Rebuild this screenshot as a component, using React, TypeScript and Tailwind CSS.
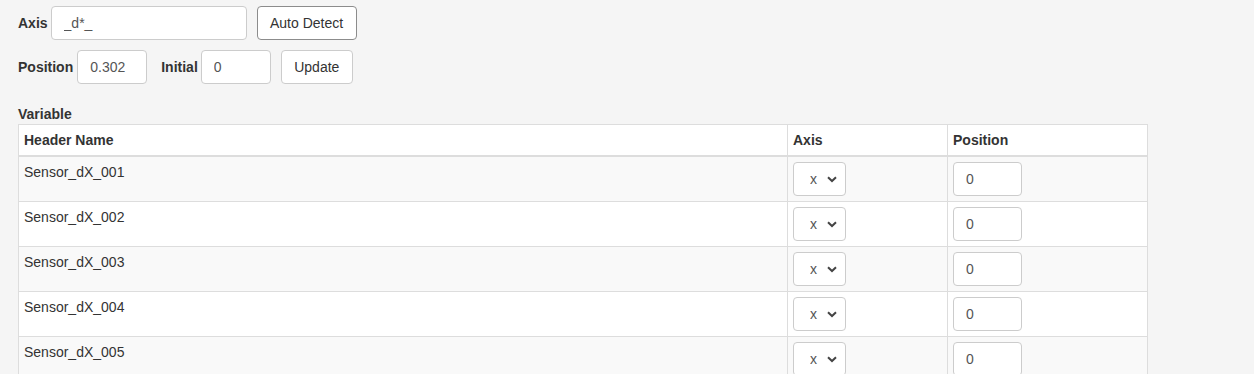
import { useState } from "react";

const font = { fontFamily: '"Liberation Sans", Arial, Helvetica, sans-serif' };

const inputCls =
  "h-[34px] rounded-[4px] border border-[#ccc] bg-white px-3 text-[14px] text-[#555] outline-none";
const btnCls =
  "h-[34px] rounded-[4px] border bg-white px-3 text-[14px] text-[#333]";

const rows = ["Sensor_dX_001", "Sensor_dX_002", "Sensor_dX_003", "Sensor_dX_004", "Sensor_dX_005"];

function AxisSelect() {
  return (
    <div className="relative h-[34px] w-[53px]">
      <select
        defaultValue="x"
        className="h-full w-full appearance-none rounded-[4px] border border-[#ccc] bg-white pl-[16px] text-[14px] text-[#555] outline-none"
      >
        <option value="x">x</option>
        <option value="y">y</option>
        <option value="z">z</option>
      </select>
      <svg
        className="pointer-events-none absolute right-[9px] top-[14px]"
        width="10"
        height="7"
        viewBox="0 0 10 7"
      >
        <path d="M1 1.2 L5 5 L9 1.2" fill="none" stroke="#444" strokeWidth="2" />
      </svg>
    </div>
  );
}

export default function App() {
  const [axis, setAxis] = useState("_d*_");
  return (
    <div className="min-h-screen bg-[#f5f5f5] pl-[18px] pt-[6px] text-[14px] text-[#333]" style={font}>
      <div className="flex items-center">
        <label className="mr-[3px] font-bold">Axis</label>
        <input className={`${inputCls} w-[196px]`} value={axis} onChange={(e) => setAxis(e.target.value)} />
        <button className={`${btnCls} ml-[10px] w-[100px] border-[#8c8c8c]`}>Auto Detect</button>
      </div>
      <div className="mt-[10px] flex items-center">
        <label className="mr-[4px] font-bold">Position</label>
        <input className={`${inputCls} w-[70px]`} defaultValue="0.302" />
        <label className="ml-[14px] mr-[3px] font-bold">Initial</label>
        <input className={`${inputCls} w-[70px]`} defaultValue="0" />
        <button className={`${btnCls} ml-[10px] w-[72px] border-[#ccc]`}>Update</button>
      </div>
      <div className="mt-[20px] font-bold leading-[20px]">Variable</div>
      <table className="w-[1129px] table-fixed border-collapse">
        <colgroup>
          <col className="w-[769px]" />
          <col className="w-[160px]" />
          <col className="w-[200px]" />
        </colgroup>
        <thead>
          <tr className="bg-white">
            <th className="border border-b-2 border-[#ddd] p-[5px] text-left font-bold leading-[20px]">Header Name</th>
            <th className="border border-b-2 border-[#ddd] p-[5px] text-left font-bold leading-[20px]">Axis</th>
            <th className="border border-b-2 border-[#ddd] p-[5px] text-left font-bold leading-[20px]">Position</th>
          </tr>
        </thead>
        <tbody>
          {rows.map((name, i) => (
            <tr key={name} className={i % 2 === 0 ? "bg-[#f9f9f9]" : "bg-white"}>
              <td className="border border-[#ddd] p-[5px] align-top leading-[20px]">{name}</td>
              <td className="border border-[#ddd] p-[5px] align-top">
                <AxisSelect />
              </td>
              <td className="border border-[#ddd] p-[5px] align-top">
                <input className={`${inputCls} block w-[69px]`} defaultValue="0" />
              </td>
            </tr>
          ))}
        </tbody>
      </table>
    </div>
  );
}
